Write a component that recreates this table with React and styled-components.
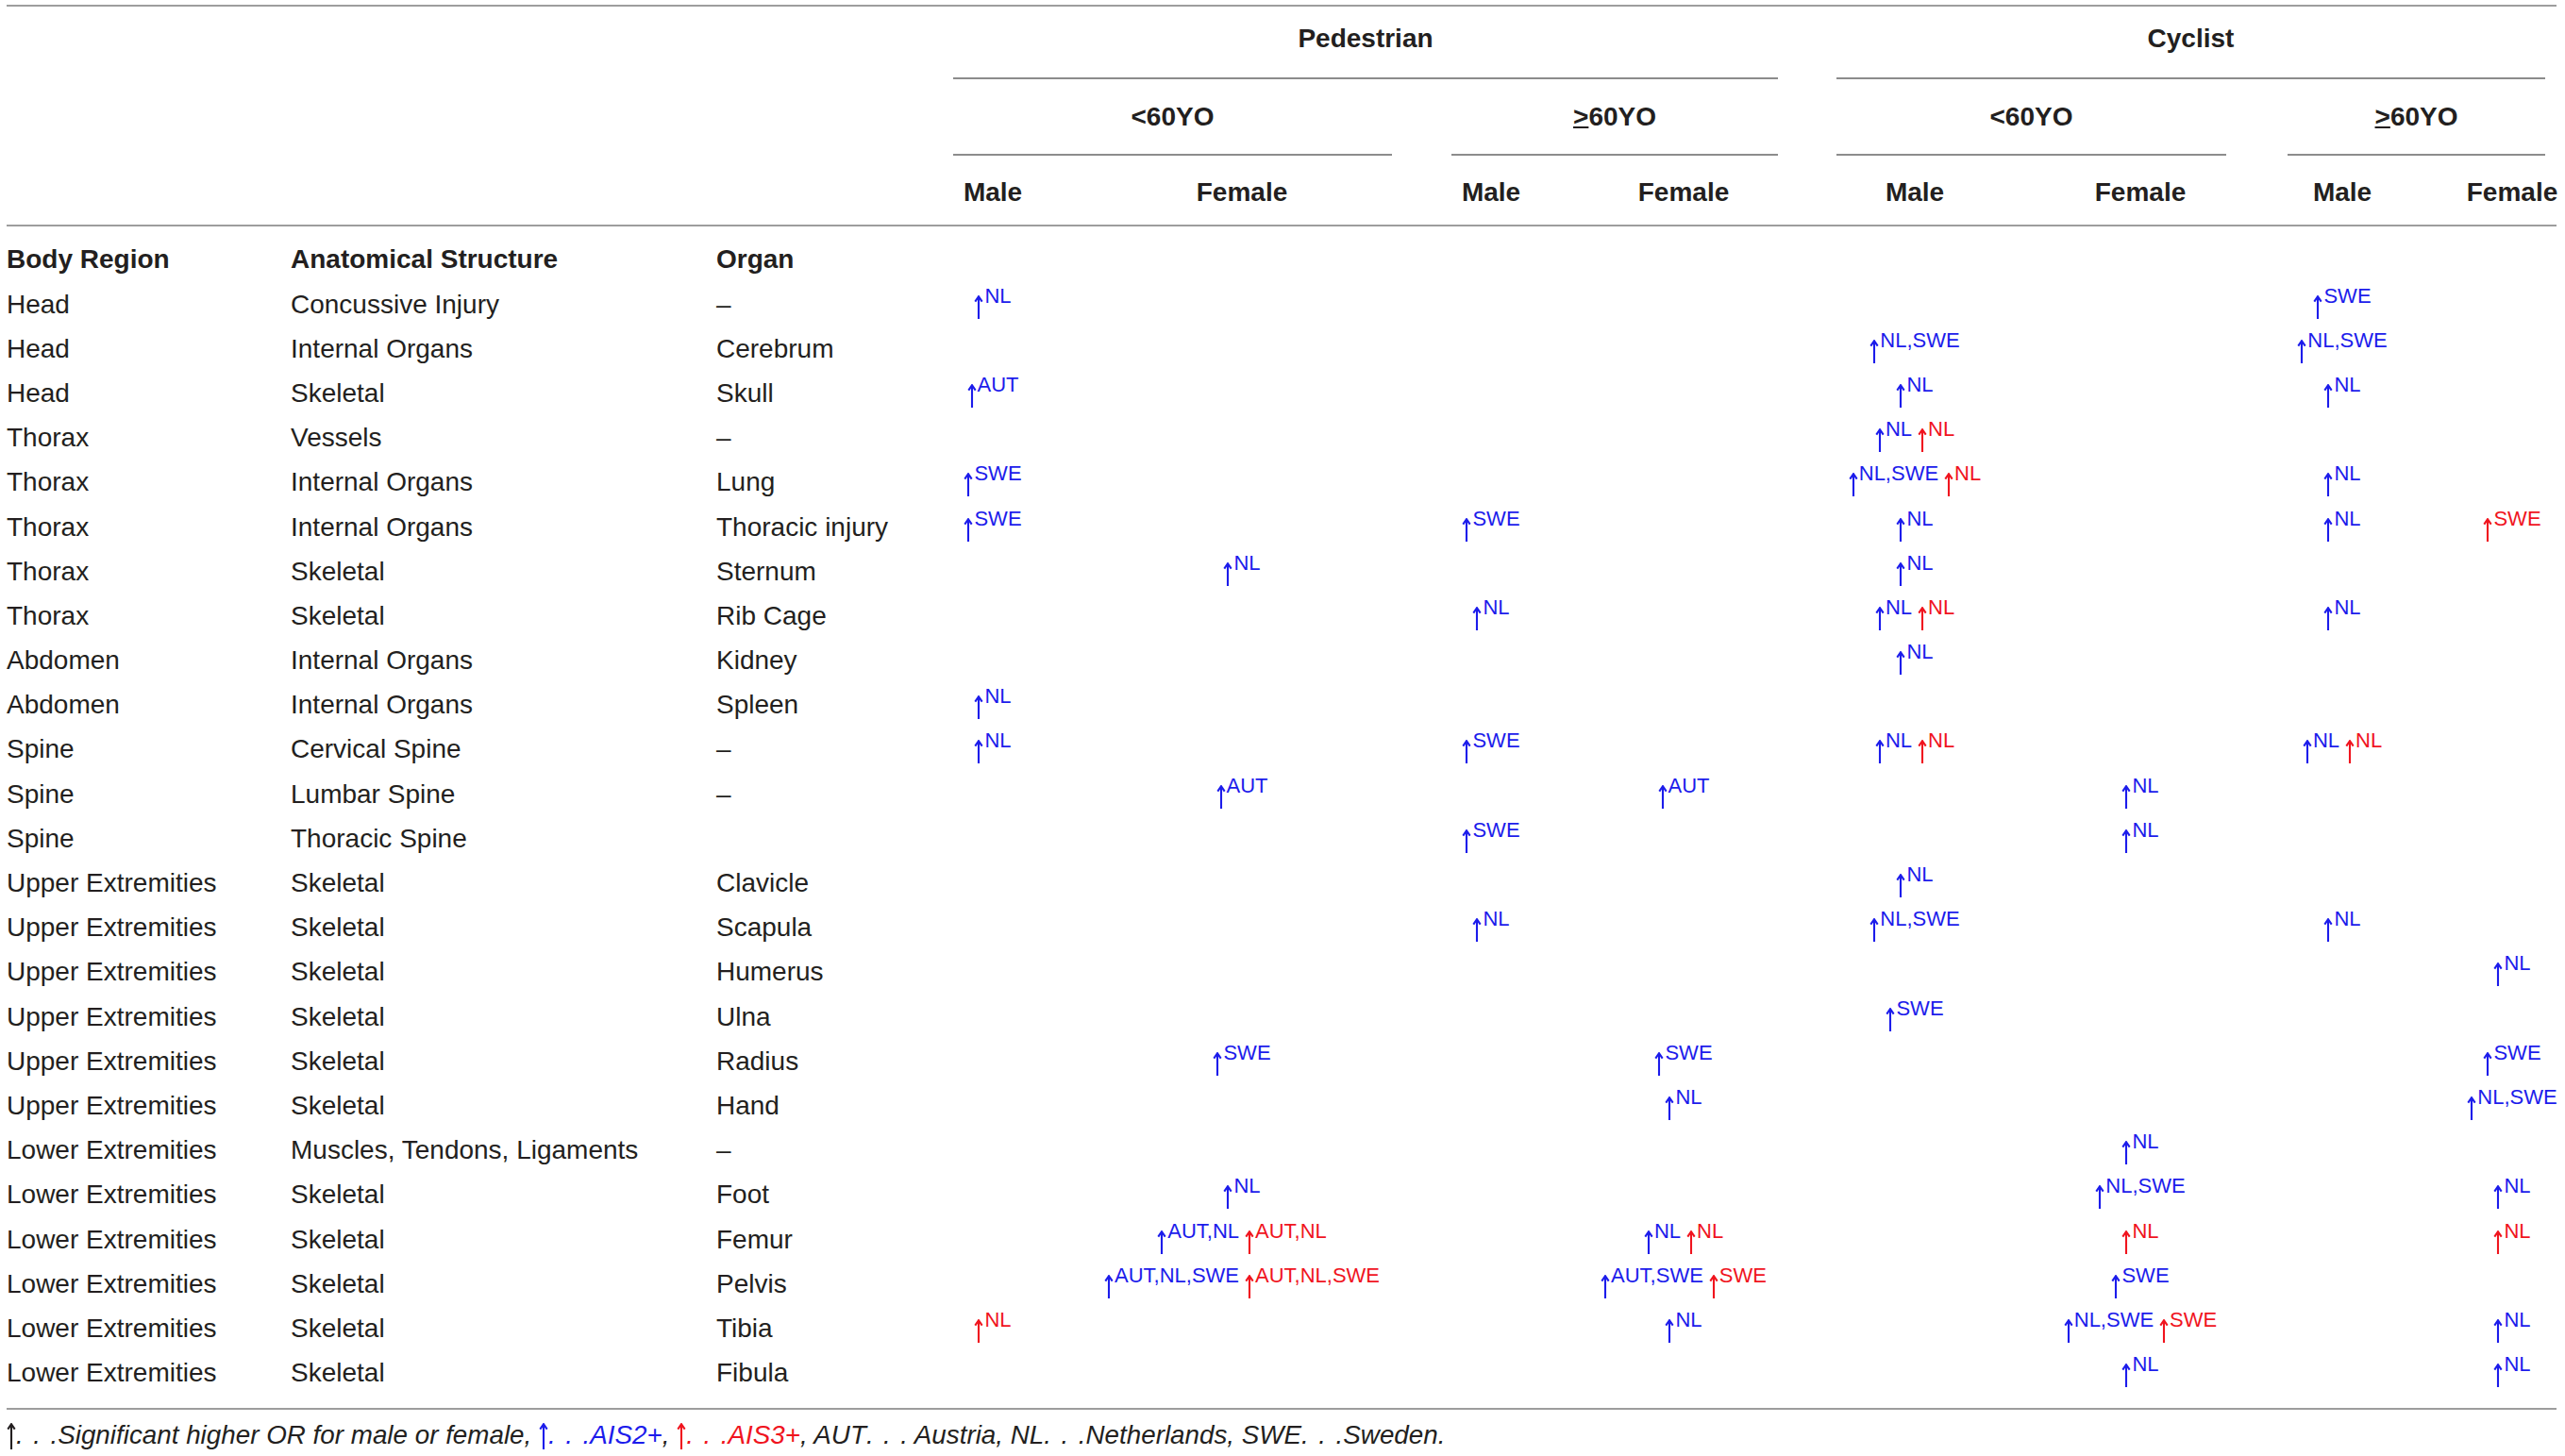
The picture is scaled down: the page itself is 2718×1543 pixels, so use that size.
import React from 'react';
import styled, { createGlobalStyle } from 'styled-components';

const BLUE = '#1c1ceb';
const RED = '#f0141e';
const INK = '#231f20';

// column tracks shared by header and body (last track runs past the window, as in the source)
const COLS = '301px 451px 251px 84px 444px 84px 324px 166px 312px 116px 244px';

const GlobalStyle = createGlobalStyle`
  html, body { margin: 0; padding: 0; background: #fff; }
  body {
    overflow: hidden;
    font-family: 'Liberation Sans', Arial, sans-serif;
    color: ${INK};
  }
`;

const Page = styled.div`
  width: 2702px;
  margin: 5px 0 0 7px;
`;

const Rule = styled.div`
  height: 2px;
  background: #9d9d9d;
`;

const HeadGrid = styled.div`
  display: grid;
  grid-template-columns: ${COLS};
  font-size: 28px;
  font-weight: 700;
  line-height: 38px;
  white-space: nowrap;
`;

const Group = styled.div`
  grid-row: ${p => p.$row};
  grid-column: ${p => p.$span};
  margin-right: ${p => p.$trim}px;
  padding: ${p => p.$pad};
  border-bottom: 2px solid #8c8c8c;
  text-align: center;
`;

const SexHead = styled.div`
  grid-row: 3;
  grid-column: ${p => p.$col};
  padding: 20px 0 15px;
  display: flex;
  justify-content: center;
`;

const Ge = styled.span`
  text-decoration: underline;
  text-decoration-thickness: 2px;
  text-underline-offset: 1px;
`;

const Body = styled.div`
  padding: 11.4px 0 13.4px;
`;

const Row = styled.div`
  display: grid;
  grid-template-columns: ${COLS};
  height: 47.2px;
  font-size: 28px;
  line-height: 47.2px;
  font-weight: ${p => (p.$head ? 700 : 400)};
  white-space: nowrap;
`;

const TextCell = styled.div``;

const DataCell = styled.div`
  display: flex;
  justify-content: center;
  align-items: flex-start;
  gap: 6px;
  padding-top: 4px;
  line-height: normal;
`;

const Mark = styled.span`
  display: inline-flex;
  align-items: flex-start;
  color: ${p => (p.$tone === 'r' ? RED : BLUE)};
`;

const ArrowSvg = styled.svg`
  flex-shrink: 0;
  margin-top: ${p => p.$top}px;
  vertical-align: ${p => p.$valign || 'top'};
`;

const Label = styled.span`
  font-size: 22px;
  line-height: 22px;
  margin-left: 1px;
`;

const Note = styled.div`
  padding-top: 9px;
  font-size: 27.8px;
  line-height: 36px;
  font-style: italic;
  white-space: nowrap;
`;

const Spaced = styled.span`
  letter-spacing: 10.5px;
`;

const Tone = styled.span`
  color: ${p => (p.$tone === 'r' ? RED : p.$tone === 'b' ? BLUE : INK)};
`;

const Arrow = ({ top = 10, h = 25, valign }) => (
  <ArrowSvg viewBox={`0 0 10 ${h}`} width="10" height={h} $top={top} $valign={valign}>
    <path d={`M5 1.2V${h}M1.3 6.6L5 1.2L8.7 6.6`} fill="none" stroke="currentColor" strokeWidth="2.1" />
  </ArrowSvg>
);

const NoteArrow = () => <Arrow top={0} h={28} valign="-6px" />;

// spaced ellipsis as typeset in the source: ". . ."
const Dots = () => <><Spaced>..</Spaced>.</>;

// cells: index 0..7 = Ped<60 M, Ped<60 F, Ped>=60 M, Ped>=60 F, Cyc<60 M, Cyc<60 F, Cyc>=60 M, Cyc>=60 F
// "b:NL,SWE|r:NL" -> blue ↑NL,SWE then red ↑NL
const rows = [
  ['Head', 'Concussive Injury', '–', { 0: 'b:NL', 6: 'b:SWE' }],
  ['Head', 'Internal Organs', 'Cerebrum', { 4: 'b:NL,SWE', 6: 'b:NL,SWE' }],
  ['Head', 'Skeletal', 'Skull', { 0: 'b:AUT', 4: 'b:NL', 6: 'b:NL' }],
  ['Thorax', 'Vessels', '–', { 4: 'b:NL|r:NL' }],
  ['Thorax', 'Internal Organs', 'Lung', { 0: 'b:SWE', 4: 'b:NL,SWE|r:NL', 6: 'b:NL' }],
  ['Thorax', 'Internal Organs', 'Thoracic injury', { 0: 'b:SWE', 2: 'b:SWE', 4: 'b:NL', 6: 'b:NL', 7: 'r:SWE' }],
  ['Thorax', 'Skeletal', 'Sternum', { 1: 'b:NL', 4: 'b:NL' }],
  ['Thorax', 'Skeletal', 'Rib Cage', { 2: 'b:NL', 4: 'b:NL|r:NL', 6: 'b:NL' }],
  ['Abdomen', 'Internal Organs', 'Kidney', { 4: 'b:NL' }],
  ['Abdomen', 'Internal Organs', 'Spleen', { 0: 'b:NL' }],
  ['Spine', 'Cervical Spine', '–', { 0: 'b:NL', 2: 'b:SWE', 4: 'b:NL|r:NL', 6: 'b:NL|r:NL' }],
  ['Spine', 'Lumbar Spine', '–', { 1: 'b:AUT', 3: 'b:AUT', 5: 'b:NL' }],
  ['Spine', 'Thoracic Spine', '', { 2: 'b:SWE', 5: 'b:NL' }],
  ['Upper Extremities', 'Skeletal', 'Clavicle', { 4: 'b:NL' }],
  ['Upper Extremities', 'Skeletal', 'Scapula', { 2: 'b:NL', 4: 'b:NL,SWE', 6: 'b:NL' }],
  ['Upper Extremities', 'Skeletal', 'Humerus', { 7: 'b:NL' }],
  ['Upper Extremities', 'Skeletal', 'Ulna', { 4: 'b:SWE' }],
  ['Upper Extremities', 'Skeletal', 'Radius', { 1: 'b:SWE', 3: 'b:SWE', 7: 'b:SWE' }],
  ['Upper Extremities', 'Skeletal', 'Hand', { 3: 'b:NL', 7: 'b:NL,SWE' }],
  ['Lower Extremities', 'Muscles, Tendons, Ligaments', '–', { 5: 'b:NL' }],
  ['Lower Extremities', 'Skeletal', 'Foot', { 1: 'b:NL', 5: 'b:NL,SWE', 7: 'b:NL' }],
  ['Lower Extremities', 'Skeletal', 'Femur', { 1: 'b:AUT,NL|r:AUT,NL', 3: 'b:NL|r:NL', 5: 'r:NL', 7: 'r:NL' }],
  ['Lower Extremities', 'Skeletal', 'Pelvis', { 1: 'b:AUT,NL,SWE|r:AUT,NL,SWE', 3: 'b:AUT,SWE|r:SWE', 5: 'b:SWE' }],
  ['Lower Extremities', 'Skeletal', 'Tibia', { 0: 'r:NL', 3: 'b:NL', 5: 'b:NL,SWE|r:SWE', 7: 'b:NL' }],
  ['Lower Extremities', 'Skeletal', 'Fibula', { 5: 'b:NL', 7: 'b:NL' }],
];

const groups = [
  { row: 1, span: '4 / 8', trim: 62, pad: '15px 0 22px', label: 'Pedestrian' },
  { row: 1, span: '8 / 12', trim: 87, pad: '15px 0 22px', label: 'Cyclist' },
  { row: 2, span: '4 / 6', trim: 63, pad: '21px 0 20px', label: <>&lt;60YO</> },
  { row: 2, span: '6 / 8', trim: 62, pad: '21px 0 20px', label: <><Ge>&gt;</Ge>60YO</> },
  { row: 2, span: '8 / 10', trim: 65, pad: '21px 0 20px', label: <>&lt;60YO</> },
  { row: 2, span: '10 / 12', trim: 87, pad: '21px 0 20px', label: <><Ge>&gt;</Ge>60YO</> },
];

const Marks = ({ spec }) =>
  spec.split('|').map((m, i) => {
    const [tone, text] = m.split(':');
    return (
      <Mark key={i} $tone={tone}>
        <Arrow />
        <Label>{text}</Label>
      </Mark>
    );
  });

export default function App() {
  return (
    <>
      <GlobalStyle />
      <Page>
        <Rule />
        <HeadGrid>
          {groups.map((g, i) => (
            <Group key={i} $row={g.row} $span={g.span} $trim={g.trim} $pad={g.pad}>
              {g.label}
            </Group>
          ))}
          {[0, 1, 2, 3, 4, 5, 6, 7].map(i => (
            <SexHead key={i} $col={i + 4}>{i % 2 === 0 ? 'Male' : 'Female'}</SexHead>
          ))}
        </HeadGrid>
        <Rule />
        <Body>
          <Row $head>
            <TextCell>Body Region</TextCell>
            <TextCell>Anatomical Structure</TextCell>
            <TextCell>Organ</TextCell>
          </Row>
          {rows.map(([region, structure, organ, cells], r) => (
            <Row key={r}>
              <TextCell>{region}</TextCell>
              <TextCell>{structure}</TextCell>
              <TextCell>{organ}</TextCell>
              {[0, 1, 2, 3, 4, 5, 6, 7].map(c => (
                <DataCell key={c}>{cells[c] && <Marks spec={cells[c]} />}</DataCell>
              ))}
            </Row>
          ))}
        </Body>
        <Rule />
        <Note>
          <NoteArrow /><Dots />Significant higher OR for male or female,{' '}
          <Tone $tone="b"><NoteArrow /><Dots />AIS2+</Tone>,{' '}
          <Tone $tone="r"><NoteArrow /><Dots />AIS3+</Tone>, AUT<Dots /> Austria, NL<Dots />Netherlands, SWE<Dots />Sweden.
        </Note>
      </Page>
    </>
  );
}
